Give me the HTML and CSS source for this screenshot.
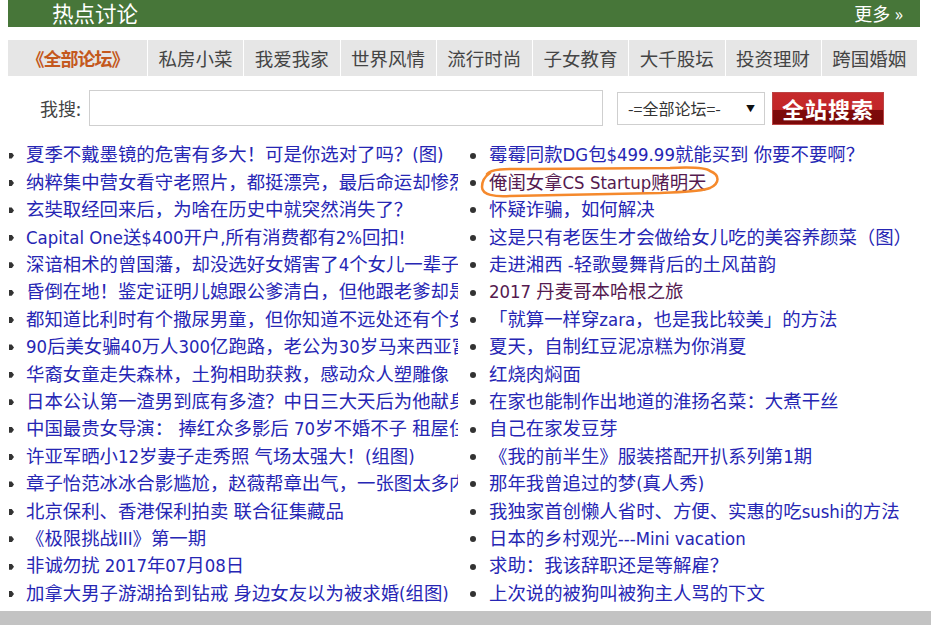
FILE: index.html
```html
<!DOCTYPE html>
<html lang="zh">
<head>
    <meta charset="UTF-8">
    <meta name="viewport" content="width=device-width, initial-scale=1.0">
    <title>热点讨论</title>
    <link rel="stylesheet" href="styles.css">
</head>
<body>
    <div class="page">
        <div class="hot-head">
            <span class="hot-title">热点讨论</span>
            <a class="more" href="#">更多 &raquo;</a>
        </div>

        <!-- 论坛分类 -->
        <ul class="tabs">
            <li class="on">《全部论坛》</li>
            <li>私房小菜</li>
            <li>我爱我家</li>
            <li>世界风情</li>
            <li>流行时尚</li>
            <li>子女教育</li>
            <li>大千股坛</li>
            <li>投资理财</li>
            <li>跨国婚姻</li>
        </ul>

        <form class="search">
            <label for="kw">我搜:</label>
            <input id="kw" type="text">
            <div class="select"><span>-=全部论坛=-</span><span class="arrow">&#9660;</span></div>
            <button type="button" class="go">全站搜索</button>
        </form>

        <div class="topics">
            <ul class="col left">
                <li><a href="#">夏季不戴墨镜的危害有多大！可是你选对了吗？(图)</a></li>
                <li><a href="#">纳粹集中营女看守老照片，都挺漂亮，最后命运却惨烈</a></li>
                <li><a href="#">玄奘取经回来后，为啥在历史中就突然消失了？</a></li>
                <li><a href="#">Capital One送$400开户,所有消费都有2%回扣!</a></li>
                <li><a href="#">深谙相术的曾国藩，却没选好女婿害了4个女儿一辈子</a></li>
                <li><a href="#">昏倒在地！鉴定证明儿媳跟公爹清白，但他跟老爹却是</a></li>
                <li><a href="#">都知道比利时有个撒尿男童，但你知道不远处还有个女孩</a></li>
                <li><a href="#">90后美女骗40万人300亿跑路，老公为30岁马来西亚富商</a></li>
                <li><a href="#">华裔女童走失森林，土狗相助获救，感动众人塑雕像</a></li>
                <li><a href="#">日本公认第一渣男到底有多渣？中日三大天后为他献身</a></li>
                <li><a href="#">中国最贵女导演： 捧红众多影后 70岁不婚不子 租屋住</a></li>
                <li><a href="#">许亚军晒小12岁妻子走秀照 气场太强大！(组图)</a></li>
                <li><a href="#">章子怡范冰冰合影尴尬，赵薇帮章出气，一张图太多内涵</a></li>
                <li><a href="#">北京保利、香港保利拍卖 联合征集藏品</a></li>
                <li><a href="#">《极限挑战III》第一期</a></li>
                <li><a href="#">非诚勿扰 2017年07月08日</a></li>
                <li><a href="#">加拿大男子游湖拾到钻戒 身边女友以为被求婚(组图)</a></li>
            </ul>
            <ul class="col right">
                <li><a href="#">霉霉同款DG包$499.99就能买到 你要不要啊？</a></li>
                <li><a href="#" class="visited">俺闺女拿CS Startup赌明天</a></li>
                <li><a href="#">怀疑诈骗，如何解决</a></li>
                <li><a href="#">这是只有老医生才会做给女儿吃的美容养颜菜（图）</a></li>
                <li><a href="#">走进湘西 -轻歌曼舞背后的土风苗韵</a></li>
                <li><a href="#" class="visited">2017 丹麦哥本哈根之旅</a></li>
                <li><a href="#">「就算一样穿zara，也是我比较美」的方法</a></li>
                <li><a href="#">夏天，自制红豆泥凉糕为你消夏</a></li>
                <li><a href="#">红烧肉焖面</a></li>
                <li><a href="#">在家也能制作出地道的淮扬名菜：大煮干丝</a></li>
                <li><a href="#">自己在家发豆芽</a></li>
                <li><a href="#">《我的前半生》服装搭配开扒系列第1期</a></li>
                <li><a href="#">那年我曾追过的梦(真人秀)</a></li>
                <li><a href="#">我独家首创懒人省时、方便、实惠的吃sushi的方法</a></li>
                <li><a href="#">日本的乡村观光---Mini vacation</a></li>
                <li><a href="#">求助：我该辞职还是等解雇？</a></li>
                <li><a href="#">上次说的被狗叫被狗主人骂的下文</a></li>
            </ul>

            <!-- 手画的圈 -->
            <svg class="mark" width="260" height="45" viewBox="0 0 260 45">
                <path d="M17,13 C22,7 40,8 60,8 L200,7 C220,6 235,6 240,10 C250,14 250,22 240,27 C230,31 210,31 190,32 L40,35 C25,36 12,34 12,26 C12,20 14,16 20,12" fill="none" stroke="#f5892c" stroke-width="2.5" stroke-linecap="round" stroke-linejoin="round"/>
            </svg>
        </div>
    </div>
    <div class="bottom-bar"></div>
</body>
</html>
```

FILE: styles.css
```css
body {
    margin: 0;
    background: #fff;
    font-family: "DejaVu Sans Condensed", "Liberation Sans", "Noto Sans CJK SC", sans-serif;
    overflow: hidden;
}

.page {
    width: 912px;
    margin-left: 8px;
}

/* 标题栏 */
.hot-head {
    display: flex;
    justify-content: space-between;
    align-items: center;
    height: 27px;
    padding: 0 17px 0 44px;
    background: #477639;
    color: #fff;
}

.hot-title {
    font-family: "Noto Sans CJK SC", sans-serif;
    font-size: 21.5px;
    line-height: 25px;
    margin-top: -3px;
}

.more {
    color: #fff;
    text-decoration: none;
    font-family: "Noto Sans CJK SC", sans-serif;
    font-size: 18px;
    line-height: 24px;
    margin-top: -2px;
}

/* 分类标签 */
.tabs {
    list-style: none;
    margin: 13px 0 0;
    padding: 0;
    width: 909px;
    height: 36px;
    display: flex;
    background: #e6e6e6;
}

.tabs li {
    flex: 1;
    text-align: center;
    line-height: 36px;
    font-family: "Noto Sans CJK SC", sans-serif;
    font-size: 18.5px;
    color: #444;
    border-left: 1px solid #fff;
}

.tabs li.on {
    flex: 0 0 139px;
    border-left: 0;
    color: #c4581d;
    font-weight: bold;
    font-size: 18px;
    letter-spacing: -1px;
}

/* 搜索 */
.search {
    display: flex;
    align-items: center;
    height: 36px;
    margin: 14px 0 0;
    padding-left: 32px;
}

.search label {
    font-family: "Noto Sans CJK SC", sans-serif;
    font-size: 18px;
    color: #444;
    margin-right: 8px;
}

.search input {
    width: 514px;
    height: 36px;
    box-sizing: border-box;
    border: 1px solid #cfcfcf;
    margin: 0;
}

.select {
    margin-left: 14px;
    width: 148px;
    height: 33px;
    box-sizing: border-box;
    border: 1px solid #cfcfcf;
    display: flex;
    align-items: center;
    justify-content: space-between;
    padding: 0 9px 0 10px;
    font-family: "Noto Sans CJK SC", sans-serif;
    font-size: 16px;
    color: #333;
}

.select .arrow {
    font-size: 9px;
    color: #111;
}

.go {
    margin-left: 7px;
    width: 112px;
    height: 33px;
    padding: 0;
    border: 1px solid #b44;
    background: linear-gradient(#c62a2c 0, #c22628 55%, #7e0b0b 55%, #7a0909 100%);
    color: #fff;
    font-family: "Noto Sans CJK SC", sans-serif;
    font-size: 22px;
    font-weight: bold;
    letter-spacing: 1px;
    line-height: 31px;
}

/* 帖子列表 */
.topics {
    position: relative;
    display: grid;
    grid-template-columns: 450px 1fr;
    column-gap: 12px;
    margin-top: 15.4px;
}

.col {
    list-style: none;
    margin: 0;
    padding: 0;
    min-width: 0;
}

.col li {
    display: flex;
    align-items: center;
    font-size: 18.4px;
    line-height: 27.4px;
    white-space: nowrap;
    overflow: hidden;
}

.left li::before {
    content: "";
    flex: none;
    width: 5px;
    height: 6px;
    margin: 1px 12px 0 1px;
    background: #333;
    clip-path: polygon(0 0, 55% 0, 100% 50%, 55% 100%, 0 100%);
}

.right li::before {
    content: "";
    flex: none;
    width: 6px;
    height: 6px;
    margin: 1px 13px 0 0;
    border-radius: 50%;
    background: #333;
}

.col a {
    color: #2626b4;
    text-decoration: none;
}

.col a.visited {
    color: #551a4f;
}

.mark {
    position: absolute;
    left: 462px;
    top: 20px;
    pointer-events: none;
}

.bottom-bar {
    height: 20px;
    margin-top: 4px;
    background: #c3c3c3;
}
```
